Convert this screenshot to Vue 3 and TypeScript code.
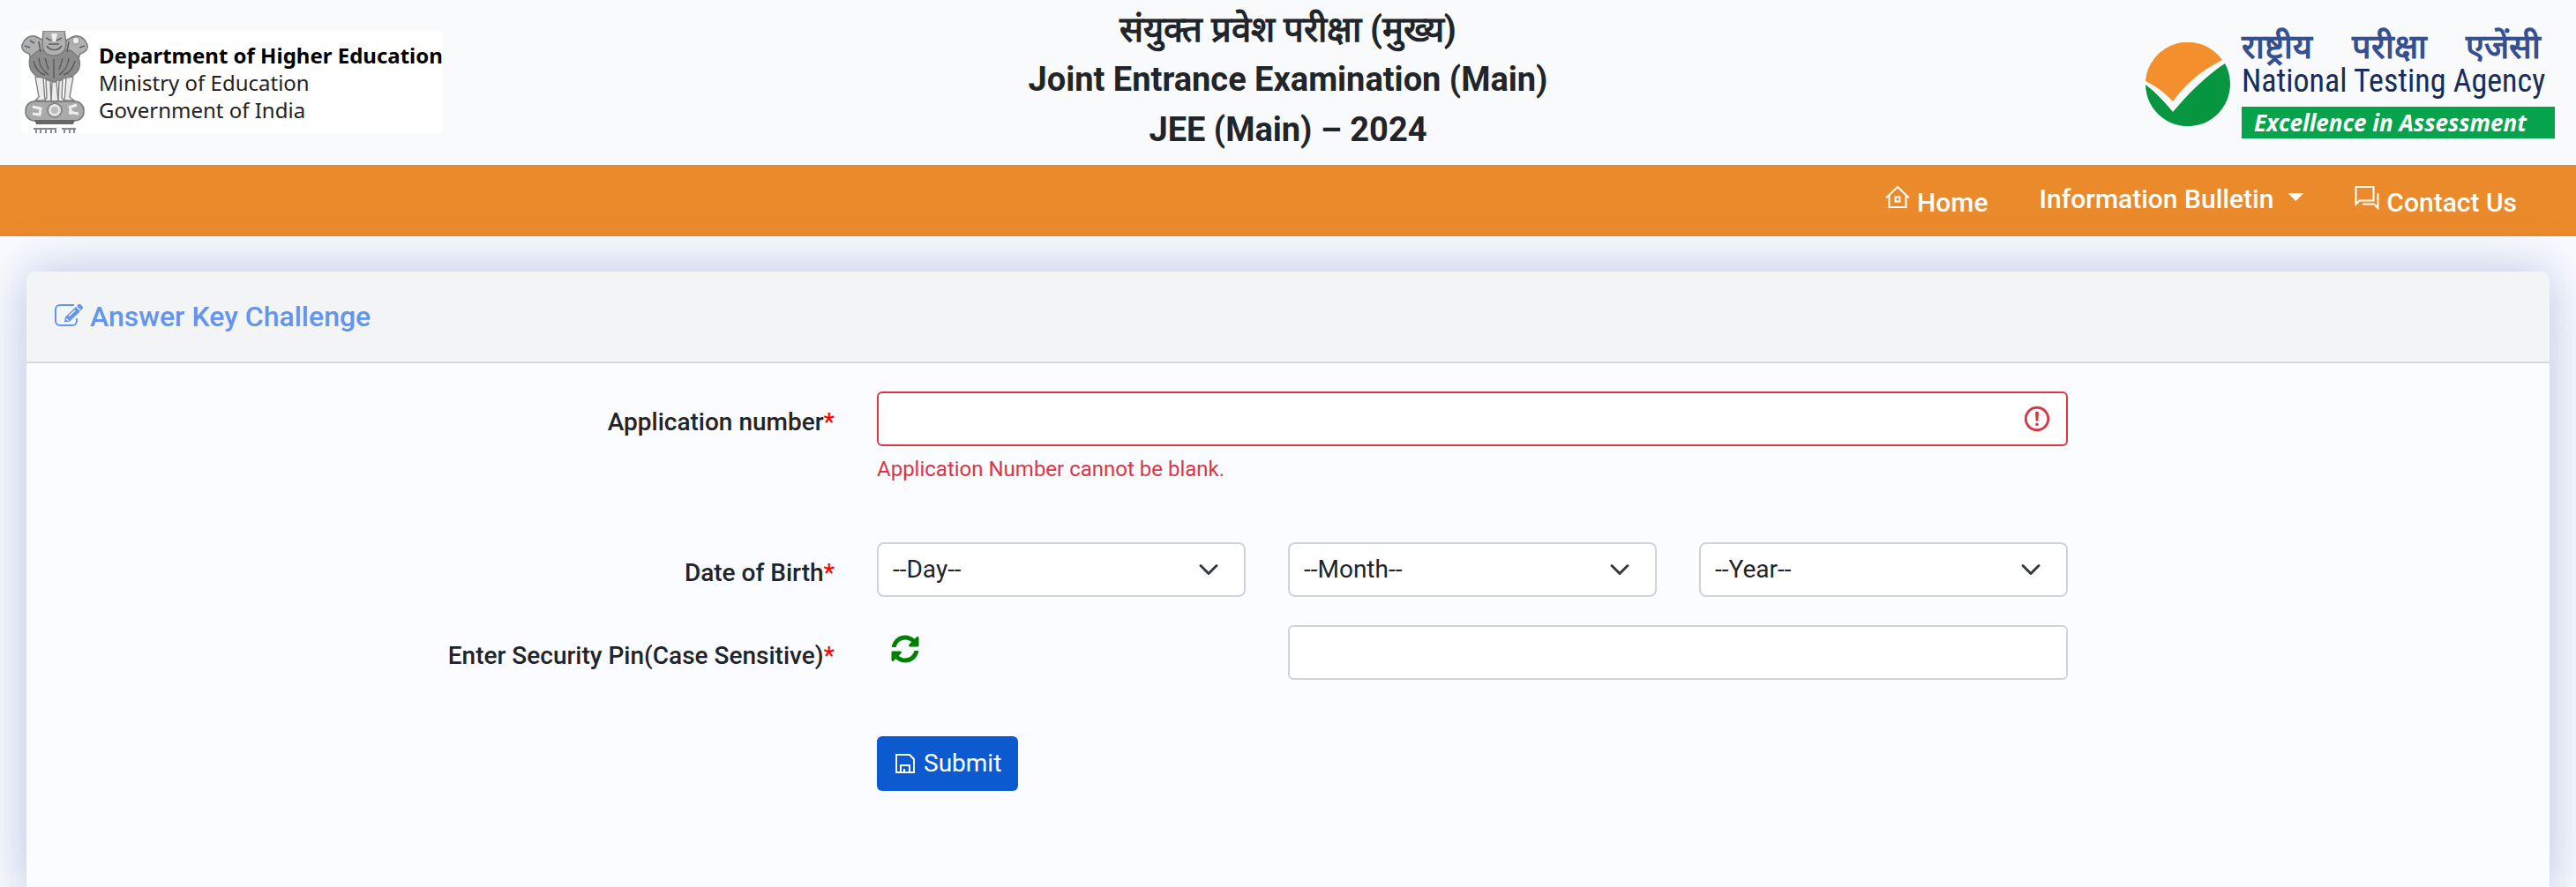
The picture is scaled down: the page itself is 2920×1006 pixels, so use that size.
<script setup lang="ts">
import { ref } from 'vue'

interface Picker {
  id: string
  placeholder: string
  options: string[]
}

const range = (from: number, to: number): string[] =>
  Array.from({ length: to - from + 1 }, (_, i) => String(from + i))

const pickers: Picker[] = [
  { id: 'day', placeholder: '--Day--', options: range(1, 31) },
  { id: 'month', placeholder: '--Month--', options: range(1, 12) },
  { id: 'year', placeholder: '--Year--', options: range(1980, 2012) },
]

const applicationNumber = ref('')
const pin = ref('')
const birth = ref<Record<string, string>>({ day: '', month: '', year: '' })
</script>

<template>
  <div class="page">
    <header class="top">
      <div class="ministry">
        <svg class="emblem" viewBox="0 0 76 116" aria-hidden="true">
          <g fill="#b0b0b0" stroke="#7c7c7c" stroke-width="1.5">
            <path d="M9 26C2 24-1 19 2 14C5 7 12 4 18 7L27 12L26 32L12 34Z" />
            <path d="M67 26C74 24 77 19 74 14C71 7 64 4 58 7L49 12L50 32L64 34Z" />
            <path fill="#8c8c8c" d="M10 30C7 44 14 53 28 54L37 58L47 54C61 53 70 44 65 30L56 22H20Z" />
            <path fill="#b0b0b0" d="M25 0H49L51 14C51 23 45 28 37 28C29 28 24 23 24 14Z" />
          </g>
          <g fill="none" stroke="#5f5f5f" stroke-width="1.6">
            <path d="M28 8L34 11M46 8L40 11M29 17C33 23 42 23 46 17M31 15H43" />
            <path d="M4 17L10 19M10 11L15 14M72 17L66 19M20 12L22 24M54 12L52 24" />
            <path d="M14 34C16 43 20 48 27 50M20 31C21 40 24 45 31 50M27 31L31 44M37 32V54M47 31L43 44M54 31C53 40 50 45 43 50M61 34C59 43 55 48 48 50" />
          </g>
          <path d="M34 3H41L39 12H36Z" fill="#eee" />
          <circle cx="62" cy="11" r="4" fill="#eee" stroke="#8c8c8c" />
          <g fill="#ececec" stroke="#808080" stroke-width="1.4">
            <path d="M16 52L20 75L16 79H27L25 53Z" />
            <path d="M28 55L29 76L26 80H34L33 57Z" />
            <path d="M35 58L34 80H42L40 58Z" />
            <path d="M47 55L46 76L50 80H42L43 57Z" />
            <path d="M59 52L55 75L60 79H49L51 53Z" />
          </g>
          <rect x="5" y="80" width="66" height="22" rx="10" fill="#aaa" stroke="#777" stroke-width="1.5" />
          <circle cx="38" cy="90" r="8" fill="#e4e4e4" stroke="#858585" stroke-width="2" />
          <circle cx="38" cy="90" r="4" fill="#bcbcbc" />
          <path d="M13 86L22 88L21 95L13 94M54 87L63 84M54 92L65 94M56 88V95" fill="none" stroke="#eee" stroke-width="3" />
          <path d="M15 101H61L59 106H17Z" fill="#666" />
          <path d="M14 111H40M46 111H62M17 111V116M22 112V116M28 111V116M34 112V116M39 111V116M49 111V116M55 112V116M60 111V116" fill="none" stroke="#8a8a8a" stroke-width="2" />
        </svg>
        <p class="ministry-text">
          <strong>Department of Higher Education</strong>
          <span>Ministry of Education</span>
          <span>Government of India</span>
        </p>
      </div>

      <h1 class="title">
        <span class="title-hi" lang="hi">संयुक्त प्रवेश परीक्षा (मुख्य)</span>
        <span>Joint Entrance Examination (Main)</span>
        <span>JEE (Main) – 2024</span>
      </h1>

      <div class="agency">
        <svg class="agency-mark" viewBox="0 0 96 96" aria-hidden="true">
          <path fill="#f48f2d" d="M0 44A48 48 0 0 1 87 20C64 32 47 45 31 67C22 57 12 50 0 44Z" />
          <path fill="#05963f" d="M0 48A48 48 0 1 0 90 24C66 40 49 58 31 79C22 68 12 57 0 48Z" />
        </svg>
        <div class="agency-text">
          <span class="agency-hi" lang="hi">
            <span>राष्ट्रीय</span> <span>परीक्षा</span> <span>एजेंसी</span>
          </span>
          <span class="agency-en">National Testing Agency</span>
          <span class="agency-tag">Excellence in Assessment</span>
        </div>
      </div>
    </header>

    <nav class="bar">
      <a class="link with-icon" href="#home">
        <svg class="nav-icon" viewBox="0 0 28 28" fill="none" stroke="currentColor" stroke-width="2" aria-hidden="true">
          <path d="M1 14.500L14 2L27 14.500M4.500 12V25H23.500V12M11.500 13.500H16.500V18.500H11.500Z" />
        </svg>
        <span>Home</span>
      </a>
      <a class="link" href="#bulletin">Information Bulletin<i class="caret"></i></a>
      <a class="link with-icon" href="#contact">
        <svg class="nav-icon" viewBox="0 0 28 28" fill="none" stroke="currentColor" stroke-width="2" aria-hidden="true">
          <path d="M1.500 2H21.500V17.500H5.500L1.500 21.500ZM26.500 9V26L22 21.500H9" />
        </svg>
        <span>Contact Us</span>
      </a>
    </nav>

    <main class="card">
      <h2 class="card-head">
        <svg class="edit-icon" viewBox="0 0 32 27" aria-hidden="true">
          <path d="M22 2H6A5 5 0 0 0 1 7V20A5 5 0 0 0 6 25H20A5 5 0 0 0 25 20V17" fill="none" stroke="currentColor" stroke-width="2" />
          <path d="M11 21.500L12 15.500L24 4L29 9L17 20.500Z" fill="currentColor" />
          <path d="M25 3L27 1Q28 .5 29 1L31.500 3.500Q32.500 5 31.500 6L30 8Z" fill="currentColor" />
          <path d="M13 17.500L15.500 19.500M16 14.500L23 8" stroke="#f3f4f6" stroke-width="1.500" fill="none" />
        </svg>
        Answer Key Challenge
      </h2>

      <form class="form" @submit.prevent>
        <div class="row tall">
          <label class="label" for="application">Application number<b>*</b></label>
          <div class="field wide">
            <input id="application" v-model="applicationNumber" class="control invalid" type="text" aria-describedby="application-error" />
            <p id="application-error" class="error">Application Number cannot be blank.</p>
          </div>
        </div>

        <div class="row">
          <label class="label" for="day">Date of Birth<b>*</b></label>
          <div v-for="p in pickers" :key="p.id" class="field">
            <select :id="p.id" v-model="birth[p.id]" class="control select" :aria-label="p.id">
              <option value="">{{ p.placeholder }}</option>
              <option v-for="o in p.options" :key="o" :value="o">{{ o }}</option>
            </select>
          </div>
        </div>

        <div class="row">
          <label class="label" for="pin">Enter Security Pin(Case Sensitive)<b>*</b></label>
          <div class="field">
            <button class="refresh" type="button" aria-label="Refresh pin">
              <svg viewBox="0 0 512 512" fill="currentColor" aria-hidden="true">
                <path d="M370.720 133.280C339.458 104.008 298.888 87.962 255.848 88c-77.458.068-144.328 53.178-162.791 126.850-1.344 5.363-6.122 9.150-11.651 9.150H24.103c-7.498 0-13.194-6.807-11.807-14.176C33.933 94.924 134.813 8 256 8c66.448 0 126.791 26.136 171.315 68.685L463.030 40.970C478.149 25.851 504 36.559 504 57.941V192c0 13.255-10.745 24-24 24H345.941c-21.382 0-32.090-25.851-16.971-40.971l41.750-41.749zM32 296h134.059c21.382 0 32.090 25.851 16.971 40.971l-41.750 41.750c31.262 29.273 71.835 45.319 114.876 45.280 77.418-.070 144.315-53.144 162.787-126.849 1.344-5.363 6.122-9.150 11.651-9.150h57.304c7.498 0 13.194 6.807 11.807 14.176C478.067 417.076 377.187 504 256 504c-66.448 0-126.791-26.136-171.315-68.685L48.970 471.030C33.851 486.149 8 475.441 8 454.059V320c0-13.255 10.745-24 24-24z" />
              </svg>
            </button>
          </div>
          <div class="field double">
            <input id="pin" v-model="pin" class="control" type="text" />
          </div>
        </div>

        <div class="row submit-row">
          <div class="field after-label">
            <button class="submit" type="submit">
              <svg class="save-icon" viewBox="0 0 22 22" fill="none" stroke="currentColor" stroke-width="2" aria-hidden="true">
                <path d="M1 1H16L21 6V21H1ZM6 21V13H16V21M10 21V17" />
              </svg>
              Submit
            </button>
          </div>
        </div>
      </form>
    </main>
  </div>
</template>

<style>
body {
  margin: 0;
  background: #f8fafc;
}
</style>

<style scoped>
* {
  box-sizing: border-box;
}

.page {
  display: flex;
  flex-direction: column;
  min-height: 100vh;
  overflow: hidden;
  font-family: Roboto, sans-serif;
  font-size: 28px;
  color: #212529;
  background: #fafbfe;
}

.top {
  display: grid;
  grid-template-columns: 1fr auto 1fr;
  align-items: center;
  padding: 5px 24px 11px;
  background: #f8fafc;
}

.ministry {
  display: flex;
  justify-self: start;
  gap: 12px;
  height: 116px;
  margin-top: 4px;
  background: #fff;
}

.emblem {
  width: 76px;
  height: 116px;
}

.ministry-text {
  display: flex;
  flex-direction: column;
  margin: 12px 0 0;
  font-family: "Noto Sans", sans-serif;
  font-size: 24px;
  line-height: 31px;
  color: #222;
}

.ministry-text strong {
  color: #000;
}

.title {
  display: flex;
  flex-direction: column;
  margin: 0;
  font-size: 38px;
  font-weight: 700;
  line-height: 57px;
  text-align: center;
}

.title-hi {
  font-size: 40px;
}

.agency {
  display: flex;
  justify-self: end;
  align-items: center;
  gap: 13px;
  margin-top: 10px;
}

.agency-mark {
  width: 96px;
  height: 96px;
}

.agency-text {
  display: flex;
  flex-direction: column;
  width: 355px;
  white-space: nowrap;
}

.agency-hi {
  display: flex;
  justify-content: space-between;
  padding-right: 16px;
  font-size: 38px;
  font-weight: 600;
  line-height: 36px;
  color: #354f8f;
}

.agency-en {
  padding-bottom: 8px;
  font-family: "Roboto Condensed", "Liberation Sans Narrow", "Open Sans", sans-serif;
  font-size: 36px;
  line-height: 42px;
  color: #1b2c58;
}

.agency-tag {
  padding-left: 14px;
  font-family: "Open Sans", sans-serif;
  font-size: 26px;
  font-style: italic;
  font-weight: 700;
  line-height: 36px;
  color: #fff;
  background: #05a44c;
}

.bar {
  display: flex;
  justify-content: flex-end;
  gap: 58px;
  height: 81px;
  padding: 19px 67px 0 0;
  background: #eb8a2b;
}

.link {
  display: flex;
  font-size: 30px;
  font-weight: 500;
  line-height: 40px;
  color: #fff;
  text-decoration: none;
}

.with-icon {
  gap: 8px;
}

.with-icon span {
  padding-top: 4px;
}

.nav-icon {
  width: 28px;
  height: 28px;
  margin-top: 4px;
}

.caret {
  margin: 13px 0 0 16px;
  width: 18px;
  height: 9px;
  background: #fff;
  clip-path: polygon(0 0, 100% 0, 50% 100%);
}

.card {
  flex: 1;
  margin: 40px 30px 0;
  border-radius: 10px 10px 0 0;
  background: #fbfcff;
  box-shadow: 0 0 60px rgba(80, 110, 185, 0.4);
}

.card-head {
  display: flex;
  gap: 8px;
  margin: 0;
  padding: 30px 32px;
  border-bottom: 2px solid #d5d7d9;
  border-radius: 10px 10px 0 0;
  font-size: 32px;
  font-weight: 500;
  line-height: 42px;
  color: #6495ed;
  background: #f3f4f6;
}

.edit-icon {
  width: 32px;
  height: 27px;
  margin-top: 6px;
}

.form {
  padding: 32px 56px 0 8px;
}

.row {
  display: grid;
  grid-template-columns: 4fr repeat(4, 2fr);
  margin-bottom: 32px;
}

.tall {
  min-height: 139px;
}

.label {
  padding: 14px 24px 0 0;
  font-weight: 500;
  line-height: 42px;
  text-align: right;
}

.label b {
  font-weight: 500;
  color: #f00;
}

.field {
  padding: 0 24px;
}

.wide {
  grid-column: span 3;
}

.double {
  grid-column: span 2;
}

.after-label {
  grid-column: 2;
}

.submit-row {
  margin: 64px 0 120px;
}

.control {
  display: block;
  width: 100%;
  height: 62px;
  padding: 0 16px;
  border: 2px solid #ced4da;
  border-radius: 6px;
  font: inherit;
  color: inherit;
  background-color: #fff;
}

.select {
  appearance: none;
  padding-bottom: 2px;
  border-radius: 8px;
  background-image: url("data:image/svg+xml,%3Csvg xmlns='http://www.w3.org/2000/svg' viewBox='0 0 16 16'%3E%3Cpath fill='none' stroke='%23343a40' stroke-linecap='round' stroke-linejoin='round' stroke-width='2' d='m2 5 6 6 6-6'/%3E%3C/svg%3E");
  background-position: right 24px center;
  background-repeat: no-repeat;
  background-size: 32px 24px;
}

.invalid {
  border-color: #dc3545;
  background-image: url("data:image/svg+xml,%3Csvg xmlns='http://www.w3.org/2000/svg' viewBox='0 0 12 12' fill='none' stroke='%23dc3545'%3E%3Ccircle cx='6' cy='6' r='4.500'/%3E%3Cpath stroke-linejoin='round' d='M5.800 3.600h.4L6 6.500z'/%3E%3Ccircle cx='6' cy='8.200' r='.6' fill='%23dc3545' stroke='none'/%3E%3C/svg%3E");
  background-position: right 16px center;
  background-repeat: no-repeat;
  background-size: 34px 34px;
}

.error {
  margin: 8px 0 0;
  font-size: 24px;
  line-height: 36px;
  color: #dc3545;
}

.refresh {
  display: block;
  margin: 11px 0 0 16px;
  padding: 0;
  border: 0;
  color: #008000;
  background: none;
}

.refresh svg {
  display: block;
  width: 32px;
  height: 32px;
}

.submit {
  display: flex;
  align-items: center;
  gap: 10px;
  height: 62px;
  padding: 0 19px 2px 21px;
  border: 0;
  border-radius: 6px;
  font: inherit;
  color: #fff;
  background: #0b5ad0;
}

.save-icon {
  width: 22px;
  height: 22px;
  margin-top: 2px;
}
</style>
